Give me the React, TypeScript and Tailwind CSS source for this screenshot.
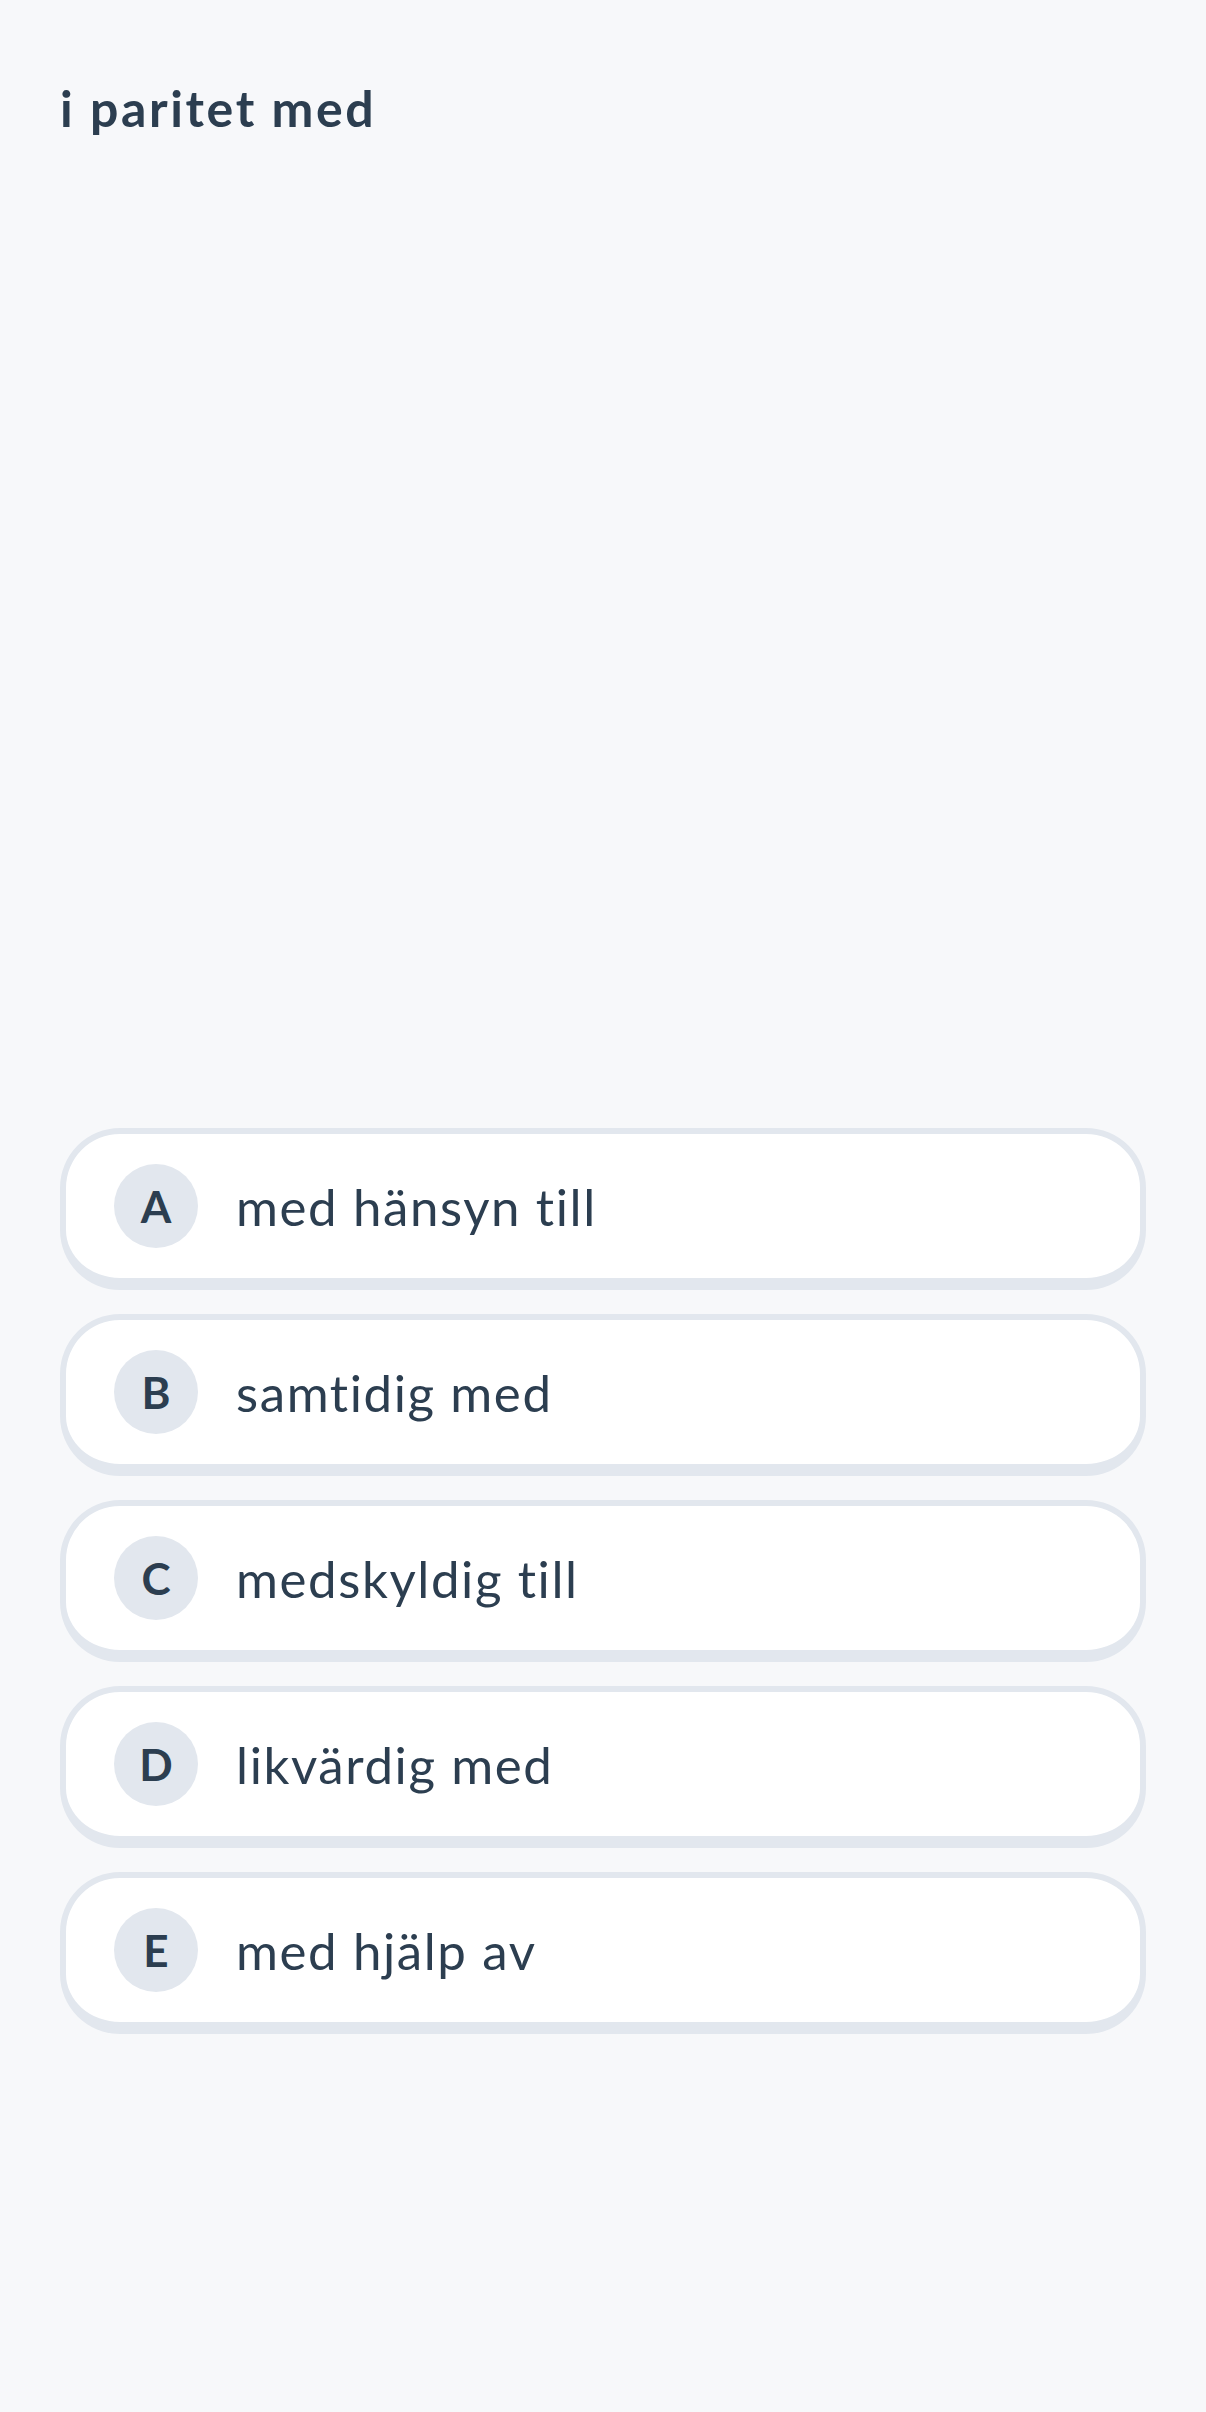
const options = [
  { key: 'A', text: 'med hänsyn till' },
  { key: 'B', text: 'samtidig med' },
  { key: 'C', text: 'medskyldig till' },
  { key: 'D', text: 'likvärdig med' },
  { key: 'E', text: 'med hjälp av' },
];

export default function App() {
  return (
    <div
      className="min-h-[2412px] w-full bg-[#f7f8fa] px-[60px] pt-[72px] text-[#2c3e50] [font-variant-ligatures:none]"
      style={{ fontFamily: 'Lato, "Open Sans", sans-serif' }}
    >
      <h1 className="text-[50px] font-bold leading-[72px] tracking-[2.6px]">i paritet med</h1>

      <div className="mt-[984px] flex flex-col gap-[24px]">
        {options.map((opt) => (
          <button
            key={opt.key}
            className="flex h-[162px] w-full items-center gap-[38px] rounded-[60px] border-[6px] border-b-[12px] border-[#e2e7ee] bg-white px-[48px] text-left"
          >
            <span className="flex h-[84px] w-[84px] shrink-0 items-center justify-center rounded-full bg-[#e2e7ee] text-[44px] font-bold leading-none">
              {opt.key}
            </span>
            <span className="text-[51px] leading-none tracking-[1.6px]">{opt.text}</span>
          </button>
        ))}
      </div>
    </div>
  );
}
